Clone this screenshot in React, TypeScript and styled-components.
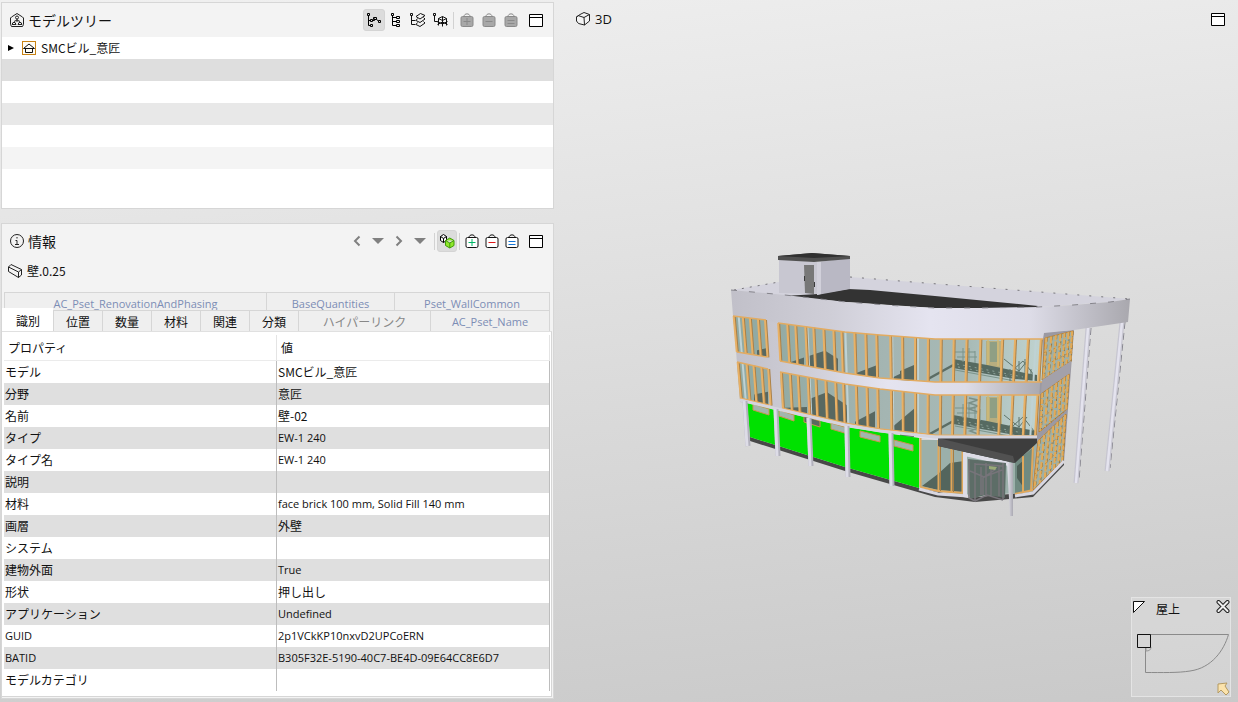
import React from "react";
import styled, { createGlobalStyle, css } from "styled-components";

const Global = createGlobalStyle`
  * { box-sizing: border-box; }
  body {
    margin: 0;
    color: #111;
    font: 12px/16px "Noto Sans CJK JP", "Open Sans", sans-serif;
  }
  button { font: inherit; color: inherit; }
`;

const latinFont = css`
  font-family: "Open Sans", sans-serif;
  font-size: 11px;
`;

const Page = styled.div`
  display: grid;
  grid-template-columns: 554fr 684fr;
  min-height: 100vh;
  background: linear-gradient(174deg, #f0f0f0, #c9c9c9);
`;

const Side = styled.div`
  display: flex;
  flex-direction: column;
  gap: 14px;
  min-width: 0;
  padding: 2px 0 3px 1px;
`;

const Panel = styled.section<{ $grow?: boolean }>`
  display: flex;
  flex-direction: column;
  flex: ${(p) => (p.$grow ? "1 0 auto" : "0 0 auto")};
  border: 1px solid #d6d6d6;
  background: #f3f3f3;
`;

const PanelHeader = styled.header`
  display: flex;
  align-items: center;
  height: 34px;
  padding: 0 6px 0 7px;
`;

const Heading = styled.h2`
  display: flex;
  align-items: center;
  gap: 4px;
  margin: 0;
  flex: 1;
  font-size: 14px;
  font-weight: 400;
  line-height: 20px;
`;

const PanelHeading = styled(Heading)`
  gap: 3px;
`;

const Tools = styled.div`
  display: flex;
  align-items: center;
`;

const ToolButton = styled.button<{ $on?: boolean; $width?: number }>`
  display: flex;
  align-items: center;
  justify-content: center;
  width: ${(p) => p.$width ?? 22}px;
  height: ${(p) => (p.$on ? 22 : 20)}px;
  padding: 0;
  border: 0;
  border-radius: 3px;
  background: none;
  ${(p) =>
    p.$on &&
    css`
      border: 1px solid #d4d4d4;
      background: #dcdcdc;
    `}
`;

const Separator = styled.span`
  width: 1px;
  height: 17px;
  margin: 0 2px;
  background: #d2d2d2;
`;

const Spacer = styled.span`
  width: 3px;
`;

const Tree = styled.ul`
  margin: 0;
  padding: 0 0 39px;
  list-style: none;
  background: #fff;
`;

const TreeRow = styled.li<{ $shade: string }>`
  display: flex;
  align-items: center;
  height: 22px;
  padding-left: 5px;
  background: ${(p) => p.$shade};
`;

const Expander = styled.button`
  display: flex;
  width: 10px;
  padding: 0;
  margin-right: 5px;
  border: 0;
  background: none;
`;

const NodeIcon = styled.span`
  display: flex;
  width: 14px;
  height: 14px;
  margin-right: 5px;
  border: 1px solid #c98314;
  background: #fffdf6;
`;

const Subject = styled.div`
  display: flex;
  align-items: center;
  gap: 4px;
  height: 26px;
  padding-left: 5px;
`;

const Tabs = styled.div`
  padding: 8px 3px 0 2px;
`;

const Tab = styled.button<{ $tone?: "dark" | "grey"; $active?: boolean }>`
  min-width: 0;
  padding: 0;
  border: 0;
  border-top: 1px solid #d6d6d6;
  border-left: 1px solid #d6d6d6;
  background: #efefef;
  line-height: 15px;
  white-space: nowrap;
  color: ${(p) => (p.$tone === "dark" ? "#111" : p.$tone === "grey" ? "#888" : "#7c8db5")};
  ${(p) => !p.$tone && latinFont}
  ${(p) =>
    p.$active &&
    css`
      margin: -2px 0 0 -2px;
      border-color: #fff;
      background: #fff;
    `}
`;

const TabRow = styled.div<{ $columns: string; $back?: boolean }>`
  display: grid;
  grid-template-columns: ${(p) => p.$columns};
  height: ${(p) => (p.$back ? 18 : 21)}px;
  border-right: 1px solid #d6d6d6;
  ${Tab} {
    padding-top: ${(p) => (p.$back ? 3 : 0)}px;
  }
`;

const Sheet = styled.div`
  flex: 1;
  margin: 0 1px 1px 0;
  padding: 3px 1px 5px 2px;
  border-top: 1px solid #e0e0e0;
  border-right: 1px solid #d6d6d6;
  border-bottom: 1px solid #d6d6d6;
  background: #fff;
`;

const Properties = styled.table`
  width: 100%;
  table-layout: fixed;
  border-collapse: separate;
  border-spacing: 0;
`;

const ColumnHead = styled.th`
  height: 26px;
  padding: 0 4px;
  border-right: 1px solid #e4e4e4;
  border-bottom: 1px solid #ebebeb;
  font-weight: 400;
  text-align: left;
`;

const PropertyRow = styled.tr`
  &:nth-child(even) {
    background: #dfdfdf;
  }
`;

const Cell = styled.td<{ $latin?: boolean }>`
  height: 22px;
  padding: 0 1px;
  border-right: 1px solid #bdbdbd;
  white-space: nowrap;
  overflow: hidden;
  ${(p) => p.$latin && latinFont}
`;

const Viewport = styled.main`
  position: relative;
  min-width: 0;
  display: flex;
  flex-direction: column;
  justify-content: space-between;
  align-items: flex-end;
  padding: 9px 7px 5px 21px;
`;

const Scene = styled.svg`
  position: absolute;
  inset: 0;
  width: 100%;
  height: 100%;
`;

const ViewHeader = styled.header`
  position: relative;
  display: flex;
  align-items: center;
  width: 100%;
  height: 20px;
  padding-right: 4px;
`;

const ViewTitle = styled(Heading)`
  font-family: "Open Sans", sans-serif;
  font-size: 13px;
`;

const MiniMap = styled.aside`
  position: relative;
  display: flex;
  flex-direction: column;
  width: 100px;
  height: 100px;
  border: 1px solid #e4e4e4;
  background: rgba(255, 255, 255, 0.18);
`;

const MiniBar = styled.div`
  display: flex;
  align-items: center;
  justify-content: space-between;
  height: 18px;
`;

const MiniLabel = styled.span`
  flex: 1;
  padding: 3px 0 0 10px;
`;

const MiniButton = styled.button`
  display: flex;
  padding: 0;
  border: 0;
  background: none;
`;

type IconProps = { size?: number; children: React.ReactNode; stroke?: string };
const Icon = ({ size = 16, children, stroke = "#222" }: IconProps) => (
  <svg width={size} height={size} viewBox="0 0 16 16" fill="none" stroke={stroke} strokeWidth="1" aria-hidden="true">
    {children}
  </svg>
);

const TreeIcon = () => (
  <Icon>
    <path d="M2.500 5 8 1.500 13.500 5 14.500 6v6.500l-1 2H2.500l-1-2V6z" />
    <circle cx="8" cy="5.500" r="1.500" />
    <path d="M8 7v3M5 9.500 8 8l3 1.500M4 10.500h2l1 2H3zM10 10.500h2l1 2H9z" />
  </Icon>
);

const HierarchyIcon = () => (
  <Icon stroke="#000">
    <path d="M1.500 1.500h2v2h-2zM2.500 3.500v10h2M2.500 8.500h2M4.500 7.500h2v2h-2zM4.500 12.500h2v2h-2zM6.500 8.500h2v-2M7.500 5.500h3v2h-3zM10.500 7.500l2 1.500M12.500 8.500h2v2h-2z" />
  </Icon>
);
const ListTreeIcon = () => (
  <Icon stroke="#000">
    <path d="M3.500 1.500h2v2h-2zM4.500 3.500v10h4M4.500 5.500h4M4.500 9.500h4M8.500 4.500h3v2h-3zM8.500 8.500h3v2h-3zM8.500 12.500h3v2h-3z" />
  </Icon>
);
const LayersIcon = () => (
  <Icon stroke="#111">
    <path d="M.5 1.500h2v2h-2zM1.500 3.500v9h4M1.500 8.500h4M6 4.500l4.500-3 4.500 2-5 3.500zM7.500 6.500l-1.500 2 4 2 5-3.500-1.500-1.500M7.500 10.500l-1.500 2 4 2 5-3.500-1.500-1.500" />
  </Icon>
);
const ModelTreeIcon = () => (
  <Icon stroke="#111">
    <path d="M1.500 1.500h2v2h-2zM2.500 3.500v6h3M6.500 6.500l4-2 4 2-4 2zM6.500 6.500v7M14.500 6.500v7M10.500 4.500v10M5 9.500l5.500 2.500 5-2.500M5.500 12.500l5-2.500 5 2.500" />
  </Icon>
);

const Bag = ({ kind, tint, disabled }: { kind: "plus" | "minus" | "equal"; tint?: string; disabled?: boolean }) => (
  <Icon stroke={disabled ? "#8a8a8a" : "#111"}>
    <path d="M5 4.500C5 1 11 1 11 4.500" />
    <rect x="2" y="4.500" width="12" height="10" rx="1.500" fill={disabled ? "#a8a8a8" : "#fff"} />
    <path
      stroke={tint ?? "#8a8a8a"}
      d={kind === "plus" ? "M8 6v7M4.500 9.500h7" : kind === "minus" ? "M4.500 9.500h7" : "M4.500 8.500h7M4.500 11.500h7"}
    />
  </Icon>
);

const WindowIcon = () => (
  <Icon stroke="#000">
    <path d="M1.500 2.500h13v12h-13z" fill="#fff" />
    <path d="M1.500 5.500h13" />
  </Icon>
);
const InfoIcon = () => (
  <Icon>
    <circle cx="8" cy="8" r="6.500" />
    <path d="M8 4v1.500M6.500 7.500H8v4M6 11.500h4" />
  </Icon>
);
const BoxIcon = () => (
  <Icon>
    <path d="M1.500 6 5 3.500 9 1.500l5.500 2v6.500L9.500 14 3.500 12.500 1.500 10zM1.500 6l1.500-1.500 6 2 5.500-3M9 6.500l.5 7.500" fill="#f4f4f4" />
  </Icon>
);
const WallIcon = () => (
  <Icon>
    <path d="M1.500 4 4 1.500l10.500 5v5.500L11.500 14.500l-10-6zM1.500 4l10 5 3-2.500M11.500 9v5.500" />
  </Icon>
);
const Chevron = ({ right }: { right?: boolean }) => (
  <Icon stroke="#808080">
    <path strokeWidth="2" d={right ? "M4.500 3.500 9 8l-4.500 4.500" : "M9.500 3.500 5 8l4.500 4.500"} />
  </Icon>
);
const Caret = () => (
  <Icon stroke="none">
    <path fill="#808080" d="M1 5h12l-6 6z" />
  </Icon>
);
const CubesIcon = () => (
  <Icon>
    <path d="M1.500 3.500 4.500 1.500l3 2v4l-3 2-3-2zM1.500 3.500l3 2 3-2M4.500 5.500v4" fill="#fff" stroke="#000" />
    <path
      d="M6.500 7.500 10.800 5l4.200 2.500v5L10.800 15l-4.300-2.500zM6.500 7.500l4.300 2.500L15 7.500M10.800 10v5"
      fill="#8fe82a"
      stroke="#3f9a08"
    />
  </Icon>
);

type Pt = [number, number];
const pts = (p: Pt[]) => p.map((q) => q.join(",")).join(" ");

/** Height of a polyline at a given x. */
const yAt = (line: Pt[], x: number) => {
  for (let i = 1; i < line.length; i++) {
    if (x <= line[i][0] || i === line.length - 1) {
      const [a, b] = [line[i - 1], line[i]];
      return a[1] + ((x - a[0]) / (b[0] - a[0])) * (b[1] - a[1]);
    }
  }
  return line[0][1];
};

/** Perspective lean of the vertical bars. */
const lean: Pt[] = [[730, 0.09], [780, 0.055], [850, 0.03], [920, 0], [1042, -0.06]];
const shift = (x: number, y: number) => x + yAt(lean, x) * (y - 320);

const barsLeft = [734, 743, 750, 758, 765];
const barsFront = [
  778, 787, 795, 805, 813, 823, 833, 841, 854, 865, 876, 890, 902, 915, 928, 941, 954, 967, 981, 1003, 1016, 1029, 1042,
];
const paleBars = [739, 807, 845, 892, 918, 1037];

/** Dark interior surfaces: x, width, height on the left edge, height on the right edge. */
type Shade = [number, number, number, number];

const floors: { top: Pt[]; bottom: Pt[]; shades: Shade[] }[] = [
  {
    top: [[733, 316], [766, 320], [778, 323], [845, 332], [880, 335], [935, 339], [1043, 339]],
    bottom: [[737, 352], [767, 357], [780, 361], [845, 373], [880, 378], [935, 382], [1042, 382]],
    shades: [[757, 10, 5, 9], [791, 13, 1, 8], [808, 16, 10, 18], [824, 14, 19, 13], [857, 19, 2, 12], [892, 21, 1, 13]],
  },
  {
    top: [[737, 362], [768, 369], [780, 372], [845, 384], [880, 389], [935, 395], [1040, 395]],
    bottom: [[740, 398], [769, 405], [782, 408], [845, 423], [880, 429], [935, 435], [1037, 436]],
    shades: [[754, 14, 7, 13], [785, 22, 1, 7], [810, 16, 16, 26], [826, 21, 27, 18], [855, 20, 3, 17], [892, 22, 3, 24]],
  },
];

const Floor = ({ top, bottom, shades }: (typeof floors)[number]) => {
  const slice = (l: Pt[], a: number, b: number) => l.slice(a, b);
  const bar = (x: number, w: number, color: string) => {
    const t = yAt(top, shift(x, top[0][1]));
    const b = yAt(bottom, shift(x, bottom[0][1]));
    return <line key={`${x}${color}`} x1={shift(x, t)} y1={t} x2={shift(x, b)} y2={b} stroke={color} strokeWidth={w} />;
  };
  const y = top[6][1];
  const lower = y > 380;
  return (
    <g>
      <polygon points={pts([...slice(top, 0, 2), ...slice(bottom, 0, 2).reverse()])} fill="#91aaa3" />
      <polygon points={pts([...slice(top, 2, 7), ...slice(bottom, 2, 7).reverse()])} fill="url(#glass)" />
      {shades.map(([x, w, h0, h1]) => {
        const y0 = yAt(bottom, x);
        const y1 = yAt(bottom, x + w);
        return <polygon key={x} points={pts([[x, y0 - h0], [x + w, y1 - h1], [x + w, y1], [x, y0]])} fill="#586861" />;
      })}
      <polygon points={`900,${y + 32} 914,${y + 26} 914,${y + 42} 900,${y + 41}`} fill="#586861" />
      <path d={`M986 ${y + 2}h16v28l-16 -3z`} fill="#b9a96f" opacity=".8" />
      <path d={`M990 ${y + 3}h7v20h-7z`} fill="#8f9f84" />
      <path d={`M988 ${y + 1}v25M998 ${y + 1}v26`} stroke="#d1ba75" strokeWidth="1.500" />
      <path d={`M928 ${y + 40}L957 ${y + 24}`} stroke="#5b6d65" strokeWidth="2.500" />
      <path d={`M953 ${y + 20}l34 6 38 8 12 2v6l-22 -2 -62 -11z`} fill="#566a61" />
      <path
        d={`M955 ${y + 31}l60 11M955 ${y + 13}h20M957 ${y + 18}h20M963 ${y + 9}v14M969 ${y + 9}v14M975 ${y + 12}v12M980 ${y + 14}v12`}
        stroke="#7b938a"
        fill="none"
      />
      <path d={`M957 ${y + 25}l66 13M958 ${y + 28}l55 10`} stroke="#8ba198" strokeDasharray="2 4" />
      <path
        d={`M1004 ${y + 20}l15 12 8 -10M1005 ${y + 38}l18 -16 11 14M1010 ${y + 30}v12M1019 ${y + 22}v18M1025 ${y + 20}v20M1031 ${y + 30}v10`}
        stroke="#5f756c"
        fill="none"
      />
      {lower && (
        <path d={`M969 ${y + 3}l9 2 -9 3 9 3 -9 3 9 3M970 ${y + 30}l8 3 -8 3 8 3`} stroke="#7c9088" strokeWidth="1.500" fill="none" />
      )}
      {paleBars.map((x) => bar(x, 2, "#bfd2d4"))}
      {[...barsLeft, ...barsFront].map((x) => bar(x + 1, 2, "#a87f48"))}
      {[...barsLeft, ...barsFront].map((x) => bar(x, 2, "#e8b166"))}
      <g stroke="#e3ab60" strokeWidth="1.500" fill="none">
        <polyline points={pts(slice(top, 0, 2))} />
        <polyline points={pts(slice(bottom, 0, 2))} />
        <polyline points={pts(slice(top, 2, 7))} />
        <polyline points={pts(slice(bottom, 2, 7))} />
      </g>
    </g>
  );
};

/** One storey of the narrow right-hand façade, given by its four corners. */
const SideBay = ({ a, b, c, d }: { a: Pt; b: Pt; c: Pt; d: Pt }) => {
  const mix = (p: Pt, q: Pt, t: number): Pt => [p[0] + (q[0] - p[0]) * t, p[1] + (q[1] - p[1]) * t];
  return (
    <g>
      <polygon points={pts([a, b, c, d])} fill="#9fb0a6" stroke="#b98236" />
      {[0.05, 0.22, 0.39, 0.55, 0.7, 0.84, 0.97].map((t, i) => {
        const p = mix(a, b, t);
        const q = mix(d, c, t);
        return (
          <g key={t}>
            <line x1={p[0] + 1} y1={p[1]} x2={q[0] + 1} y2={q[1]} stroke="#97773f" strokeDasharray="4 3" />
            <line x1={p[0]} y1={p[1]} x2={q[0]} y2={q[1]} stroke="#e3aa57" strokeWidth="2" strokeDasharray={i % 2 ? "7 2" : "5 1"} />
          </g>
        );
      })}
      {[0.35, 0.68].map((t) => {
        const p = mix(a, d, t);
        const q = mix(b, c, t);
        return <line key={t} x1={p[0]} y1={p[1]} x2={q[0]} y2={q[1]} stroke="#c08d42" strokeDasharray="2 3" />;
      })}
    </g>
  );
};

const parapetTop: Pt[] = [[731, 290], [785, 295], [846, 302], [900, 306], [935, 308], [980, 308], [1038, 307], [1073, 305], [1110, 302], [1130, 299]];

const Building = () => (
  <Scene viewBox="554 0 684 702" role="img" aria-label="3D building model">
    <defs>
      <linearGradient id="parapet">
        <stop offset="0" stopColor="#c1c0c9" />
        <stop offset=".25" stopColor="#cfced7" />
        <stop offset=".5" stopColor="#e5e4f0" />
        <stop offset=".75" stopColor="#dddce7" />
        <stop offset=".87" stopColor="#c4c3cc" />
        <stop offset="1" stopColor="#a9a8ae" />
      </linearGradient>
      <linearGradient id="glass">
        <stop offset="0" stopColor="#93aba4" />
        <stop offset=".4" stopColor="#a4b5b2" />
        <stop offset=".7" stopColor="#a6b9b5" />
        <stop offset="1" stopColor="#c0d3d0" />
      </linearGradient>
      <linearGradient id="post">
        <stop offset="0" stopColor="#e6e5ee" />
        <stop offset="1" stopColor="#aaa9b2" />
      </linearGradient>
    </defs>

    {/* free-standing posts behind the right façade */}
    {([[1088, 328, 1076, 483], [1122, 322, 1107, 471]] as number[][]).map(([x, y, x2, y2]) => (
      <g key={x}>
        <line x1={x + 3} y1={y} x2={x2 + 3} y2={y2 - 3} stroke="#85848d" strokeDasharray="7 4" />
        <line x1={x} y1={y} x2={x2} y2={y2} stroke="#c6c5d0" strokeWidth="5" />
        <line x1={x} y1={y} x2={x2} y2={y2} stroke="#e4e3ee" strokeWidth="2.500" />
      </g>
    ))}

    {/* roof */}
    <polygon points="731,290 779,282 800,280 850,277 925,283 1130,299 1110,302 1038,307 935,308 785,296" fill="#d4d3dd" />
    <polyline points="850,277 925,283 1130,299" fill="none" stroke="#77767b" strokeDasharray="2 10" />
    <polyline points="734,290 779,282" fill="none" stroke="#77767b" strokeDasharray="2 6" />
    <polygon points="783,296 818,294 848,289 870,290 935,296 1038,306 1035,308 935,308 846,302" fill="#333" />

    {/* stair tower */}
    <polygon points="779,259 817,262 817,294 779,293" fill="#c8c7d1" />
    <polygon points="817,262 850,258 850,289 817,295" fill="#b9b8c4" />
    <polygon points="817,262 821,262 821,294 817,295" fill="#d1d0da" />
    <polygon points="804,265 814,265 814,294 805,293" fill="#777" />
    <path d="M804.500 276v5M814.500 282v5" stroke="#3a3a3a" />
    <polygon points="778,256 812,253 850,256 850,259 814,262 778,260" fill="#505050" />
    <polygon points="778,256 812,253 850,256 814,258" fill="#303030" />

    {/* façade body */}
    <polygon
      points={pts([[733, 312], [1043, 332], [1040, 395], [1037, 441], [935, 440], [845, 427], [740, 402]])}
      fill="url(#parapet)"
    />
    <polygon points="1043,332 1074,330 1064,462 1032,492 1037,436" fill="#9b99a2" />
    <polygon
      points={pts([...parapetTop, [1128, 322], [1074, 330], [1044, 333], [1043, 339], [935, 339], [880, 335], [845, 332], [778, 323], [733, 316]])}
      fill="url(#parapet)"
    />
    <polyline points={pts(parapetTop)} fill="none" stroke="#86858c" strokeDasharray="6 12" />
    {floors.map((f) => (
      <Floor key={f.top[0][1]} {...f} />
    ))}

    <SideBay a={[1045, 338]} b={[1073, 331]} c={[1071, 361]} d={[1042, 380]} />
    <SideBay a={[1041, 394]} b={[1069, 374]} c={[1067, 409]} d={[1039, 432]} />
    <SideBay a={[1038, 441]} b={[1066, 414]} c={[1063, 460]} d={[1033, 490]} />
    <polygon points="1042,380 1071,361 1070,373 1041,393" fill="#a3a1aa" />

    {/* ground floor */}
    <polygon points="750,437 845,467 919,488 968,498 1032,492 1064,460 1064,465 1033,497 975,502 935,497 845,471 750,441" fill="#484848" />
    <polygon points="747,403 845,427 919,438 919,488 845,467 750,437" fill="#00e100" />
    {([[753, 404, 16], [779, 410, 15], [804, 416, 16], [831, 423, 17], [860, 431, 20], [894, 440, 19]] as number[][]).map(([x, y, w], i) => (
      <polygon
        key={x}
        points={pts([[x, y], [x + w, y + 5], [x + w, y + 11], [x, y + 6]])}
        fill={i === 2 ? "#5b6760" : "#a3b5ad"}
        stroke="#c8954f"
      />
    ))}
    <polygon points="920,440 1037,440 1032,492 968,496 920,487" fill="#9bb0aa" />
    <polygon points="922,486 938,474 950,463 964,461 963,492 938,490" fill="#53655d" />
    <polygon points="1015,462 1034,447 1032,490 1015,494" fill="#708a81" />
    <path d="M1017 466v12l7 10v-28z" fill="#4c5e56" />
    <path d="M920.500 438v49M938.500 440v50M951.500 446v46M962.500 450v43M1023 456v37M1033 446l-2 45M920 487l18 4 26 2M1015 494l18 -4" stroke="#e0a85c" strokeWidth="2" fill="none" />
    <path d="M940.500 442v49M953.500 450v42" stroke="#a57c42" />
    <path d="M919 489l19 5 30 2M1015 496l18-3 31-32" fill="none" stroke="#d8d7e1" strokeWidth="3" />

    {/* entrance */}
    <path d="M965 497V454l44 10" fill="none" stroke="#dddce6" strokeWidth="4" />
    <polygon points="968,459 1006,463 1005,498 986,495 970,499" fill="#5d6d67" />
    <path d="M969 459v39l6 3V463M986 463v33M1003 463v37M975 464l28 2M970 471l14 6 18-7M975 501l12-6 16 5M981 467v28M996 469l-13 9v17M991 467v28M999 465v31" fill="none" stroke="#77747a" strokeWidth="1.500" />
    <path d="M989 466l8 1-2 3-6-1z" fill="#9aaa78" />
    <polygon points="938,438 1037,436 1037,443 1015,463 938,446" fill="#3d3d3d" />
    <polygon points="938,438 1013,456 1015,463 938,446" fill="#515151" />
    <polygon points="1007,463 1013,463 1013,516 1010,516" fill="url(#post)" />

    {/* colonnade */}
    <polyline points="740,400 782,410 845,425 880,431 935,437 1037,437" fill="none" stroke="#d5d4de" strokeWidth="3" />
    {([[745, 401, 748, 446], [776, 409, 778, 456], [809, 418, 811, 466], [847, 426, 848, 477], [891, 433, 892, 486]] as number[][]).map(
      ([x, y, x2, y2]) => (
        <g key={x}>
          <line x1={x} y1={y} x2={x2} y2={y2} stroke="#b2b1bc" strokeWidth="5" />
          <line x1={x - 1} y1={y} x2={x2 - 1} y2={y2} stroke="#dddce7" strokeWidth="3" />
        </g>
      ),
    )}
  </Scene>
);

const treeShades = ["#fff", "#dedede", "#fff", "#e8e8e8", "#fff", "#f4f4f4"];

const properties: [string, string][] = [
  ["モデル", "SMCビル_意匠"],
  ["分野", "意匠"],
  ["名前", "壁-02"],
  ["タイプ", "EW-1 240"],
  ["タイプ名", "EW-1 240"],
  ["説明", ""],
  ["材料", "face brick 100 mm, Solid Fill 140 mm"],
  ["画層", "外壁"],
  ["システム", ""],
  ["建物外面", "True"],
  ["形状", "押し出し"],
  ["アプリケーション", "Undefined"],
  ["GUID", "2p1VCkKP10nxvD2UPCoERN"],
  ["BATID", "B305F32E-5190-40C7-BE4D-09E64CC8E6D7"],
  ["モデルカテゴリ", ""],
];

const isLatin = (s: string) => /^[\x20-\x7e]+$/.test(s);

export default function App() {
  return (
    <Page>
      <Global />
      <Side>
        <Panel>
          <PanelHeader>
            <PanelHeading><TreeIcon />モデルツリー</PanelHeading>
            <Tools>
              <ToolButton $on aria-label="階層"><HierarchyIcon /></ToolButton>
              <ToolButton aria-label="リスト"><ListTreeIcon /></ToolButton>
              <ToolButton aria-label="画層"><LayersIcon /></ToolButton>
              <ToolButton aria-label="モデル"><ModelTreeIcon /></ToolButton>
              <Separator />
              <ToolButton disabled aria-label="追加"><Bag kind="plus" disabled /></ToolButton>
              <ToolButton disabled aria-label="除外"><Bag kind="minus" disabled /></ToolButton>
              <ToolButton disabled aria-label="設定"><Bag kind="equal" disabled /></ToolButton>
              <Spacer />
              <ToolButton aria-label="最大化"><WindowIcon /></ToolButton>
            </Tools>
          </PanelHeader>
          <Tree>
            {treeShades.map((shade, i) => (
              <TreeRow key={i} $shade={shade}>
                {i === 0 && (
                  <>
                    <Expander aria-label="展開">
                      <svg width="8" height="8" viewBox="0 0 8 8"><path d="M1 1l6 3-6 3z" fill="#000" /></svg>
                    </Expander>
                    <NodeIcon>
                      <svg width="12" height="12" viewBox="0 0 12 12" fill="none" stroke="#111">
                        <path d="M.5 6.500h11L6 2zM2.500 6.500v4h7v-4" />
                      </svg>
                    </NodeIcon>
                    SMCビル_意匠
                  </>
                )}
              </TreeRow>
            ))}
          </Tree>
        </Panel>

        <Panel $grow>
          <PanelHeader>
            <PanelHeading><InfoIcon />情報</PanelHeading>
            <Tools>
              <ToolButton $width={20} aria-label="戻る"><Chevron /></ToolButton>
              <ToolButton aria-label="戻る履歴"><Caret /></ToolButton>
              <ToolButton $width={20} aria-label="進む"><Chevron right /></ToolButton>
              <ToolButton aria-label="進む履歴"><Caret /></ToolButton>
              <Separator />
              <ToolButton $on $width={20} aria-label="選択"><CubesIcon /></ToolButton>
              <Separator />
              <ToolButton $width={20} aria-label="追加"><Bag kind="plus" tint="#00b868" /></ToolButton>
              <ToolButton $width={20} aria-label="除外"><Bag kind="minus" tint="#e01818" /></ToolButton>
              <ToolButton $width={20} aria-label="設定"><Bag kind="equal" tint="#1474d4" /></ToolButton>
              <Spacer />
              <ToolButton aria-label="最大化"><WindowIcon /></ToolButton>
            </Tools>
          </PanelHeader>
          <Subject><WallIcon />壁.0.25</Subject>
          <Tabs role="tablist">
            <TabRow $back $columns="262fr 128fr 155fr">
              {["AC_Pset_RenovationAndPhasing", "BaseQuantities", "Pset_WallCommon"].map((t) => (
                <Tab key={t} role="tab">{t}</Tab>
              ))}
            </TabRow>
            <TabRow $columns="49fr 49fr 49fr 49fr 49fr 49fr 132fr 119fr">
              <Tab role="tab" $tone="dark" $active aria-selected>識別</Tab>
              {["位置", "数量", "材料", "関連", "分類"].map((t) => (
                <Tab key={t} role="tab" $tone="dark">{t}</Tab>
              ))}
              <Tab role="tab" $tone="grey">ハイパーリンク</Tab>
              <Tab role="tab">AC_Pset_Name</Tab>
            </TabRow>
          </Tabs>
          <Sheet>
            <Properties>
              <thead>
                <tr>
                  <ColumnHead scope="col">プロパティ</ColumnHead>
                  <ColumnHead scope="col">値</ColumnHead>
                </tr>
              </thead>
              <tbody>
                {properties.map(([name, value]) => (
                  <PropertyRow key={name}>
                    <Cell $latin={isLatin(name)}>{name}</Cell>
                    <Cell $latin={isLatin(value)}>{value}</Cell>
                  </PropertyRow>
                ))}
              </tbody>
            </Properties>
          </Sheet>
        </Panel>
      </Side>

      <Viewport>
        <Building />
        <ViewHeader>
          <ViewTitle><BoxIcon />3D</ViewTitle>
          <ToolButton $width={18} aria-label="最大化"><WindowIcon /></ToolButton>
        </ViewHeader>
        <MiniMap>
          <MiniBar>
            <MiniButton aria-label="サイズ変更">
              <svg width="14" height="14" viewBox="0 0 14 14"><path d="M1.500 1.500h11l-11 11z" fill="#fff" stroke="#111" /></svg>
            </MiniButton>
            <MiniLabel>屋上</MiniLabel>
            <MiniButton aria-label="閉じる">
              <svg width="14" height="14" viewBox="0 0 14 14">
                <path d="M2.500 2l9 9M11.500 2l-9 9" stroke="#222" strokeWidth="4" strokeLinecap="round" />
                <path d="M2.500 2l9 9M11.500 2l-9 9" stroke="#eee" strokeWidth="2" strokeLinecap="round" />
              </svg>
            </MiniButton>
          </MiniBar>
          <svg width="98" height="80" viewBox="0 0 98 80" fill="none">
            <path d="M5.500 18.500H96.500C92 34 80 52 58 55 46 57 30 56.500 13.500 56.500V18.500" stroke="#8a8a8a" />
            <path d="M14 32v3c3 0 5-1 5-4" stroke="#999" />
            <path d="M5.500 18.500h13v13h-13z" fill="#d6d6d6" stroke="#111" />
            <path d="M86 68l9-1-2 3 4 6-3 3-5-5-3 3z" fill="#fbe3ac" stroke="#b49a62" />
          </svg>
        </MiniMap>
      </Viewport>
    </Page>
  );
}
